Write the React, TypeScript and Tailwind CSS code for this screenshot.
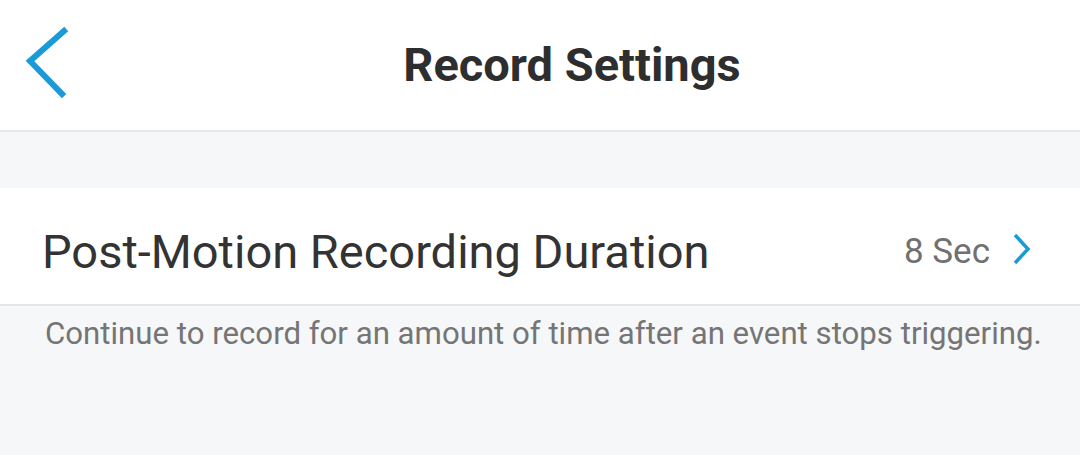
export default function App() {
  return (
    <div className="w-[1080px] h-[455px] bg-[#f6f7f9] overflow-hidden font-['Roboto',sans-serif]">
      {/* Header */}
      <div className="relative h-[132px] bg-white border-b-2 border-[#e8e9ec] flex items-center justify-center pl-[64px]">
        <button className="absolute left-[24px] top-[26px] w-[48px] h-[72px] flex items-center justify-center">
          <svg width="48" height="72" viewBox="0 0 48 72" fill="none">
            <path d="M40 5 L6 35 L38 68" stroke="#1a9ad6" strokeWidth="6" strokeLinecap="square" />
          </svg>
        </button>
        <h1 className="text-[47px] font-bold text-[#2e2e2e] leading-none -mt-[2px]">Record Settings</h1>
      </div>

      {/* Row */}
      <div className="mt-[56px] h-[118px] bg-white border-b-2 border-[#e4e5e8] flex items-center pl-[42px] pr-[48px] pt-[10px]">
        <span className="flex-1 text-[47px] text-[#333] leading-none">Post-Motion Recording Duration</span>
        <span className="text-[35px] text-[#707070] leading-none mr-[22px]">8 Sec</span>
        <svg width="20" height="34" viewBox="0 0 20 34" fill="none" className="-mt-[4px]">
          <path d="M3 3 L16 17 L3 31" stroke="#1a9ad6" strokeWidth="3.5" />
        </svg>
      </div>

      {/* Description */}
      <p className="pl-[45px] pt-[8px] text-[31.2px] text-[#757575] leading-tight whitespace-nowrap">
        Continue to record for an amount of time after an event stops triggering.
      </p>
    </div>
  )
}
